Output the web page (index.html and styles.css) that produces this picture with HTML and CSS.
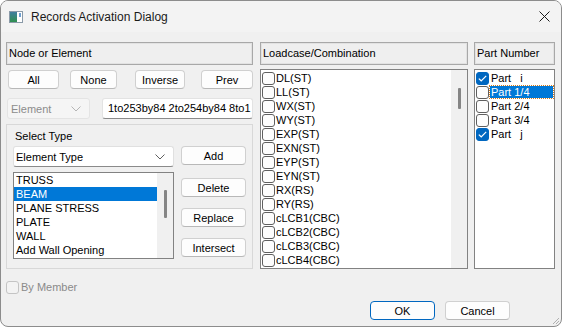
FILE: index.html
```html
<!DOCTYPE html>
<html lang="en">

<head>
    <meta charset="UTF-8">
    <title>Records Activation Dialog</title>
    <link rel="stylesheet" href="styles.css">
</head>

<body>

    <div class="window">
        <div class="titlebar">
            <svg class="app-icon" width="14" height="12" viewBox="0 0 14 12">
                <defs>
                    <linearGradient id="g1" x1="0" y1="0" x2="0" y2="1">
                        <stop offset="0" stop-color="#3f7f9f"/>
                        <stop offset="1" stop-color="#2f8f4f"/>
                    </linearGradient>
                </defs>
                <rect x="0.5" y="0.5" width="13" height="11" fill="#fff" stroke="#8a9aa8"/>
                <rect x="1" y="1" width="7" height="10" fill="url(#g1)"/>
                <rect x="10" y="2" width="2" height="4" fill="#6f9fcf"/>
            </svg>
            <span class="title">Records Activation Dialog</span>
            <svg class="close" width="11" height="11" viewBox="0 0 11 11">
                <path d="M0.5 0.5 L10.5 10.5 M10.5 0.5 L0.5 10.5" stroke="#1a1a1a" stroke-width="1"/>
            </svg>
        </div>

        <div class="content">
            <div class="columns">
                <div class="col col-left">
                    <div class="head">Node or Element</div>

                    <div class="btn-row">
                        <button class="btn b-all">All</button>
                        <button class="btn b-none">None</button>
                        <button class="btn b-inv">Inverse</button>
                        <button class="btn b-prev">Prev</button>
                    </div>

                    <div class="pick-row">
                        <div class="combo disabled">
                            <span>Element</span>
                            <svg class="chev" width="10" height="6" viewBox="0 0 10 6"><path d="M0.5 0.5 L5 5 L9.5 0.5" fill="none" stroke="#b5b5b5"/></svg>
                        </div>
                        <div class="textbox">1to253by84 2to254by84 8to1</div>
                    </div>

                    <div class="group">
                        <div class="group-label">Select Type</div>
                        <div class="group-body">
                            <div class="group-main">
                                <div class="combo type-combo">
                                    <span>Element Type</span>
                                    <svg class="chev" width="10" height="6" viewBox="0 0 10 6"><path d="M0.5 0.5 L5 5 L9.5 0.5" fill="none" stroke="#606060"/></svg>
                                </div>
                                <div class="listbox">
                                    <div class="items">
                                        <div class="item">TRUSS</div>
                                        <div class="item sel">BEAM</div>
                                        <div class="item">PLANE STRESS</div>
                                        <div class="item">PLATE</div>
                                        <div class="item">WALL</div>
                                        <div class="item">Add Wall Opening</div>
                                        <div class="item">PLANE STRAIN</div>
                                    </div>
                                    <div class="scroll"><div class="thumb t-type"></div></div>
                                </div>
                            </div>
                            <div class="group-side">
                                <button class="btn side b-add">Add</button>
                                <button class="btn side b-del">Delete</button>
                                <button class="btn side b-rep">Replace</button>
                                <button class="btn side b-int">Intersect</button>
                            </div>
                        </div>
                    </div>
                </div>

                <div class="col col-mid">
                    <div class="head">Loadcase/Combination</div>
                    <div class="listbox checklist">
                        <div class="items">
                            <div class="check-item"><span class="box"></span>DL(ST)</div>
                            <div class="check-item"><span class="box"></span>LL(ST)</div>
                            <div class="check-item"><span class="box"></span>WX(ST)</div>
                            <div class="check-item"><span class="box"></span>WY(ST)</div>
                            <div class="check-item"><span class="box"></span>EXP(ST)</div>
                            <div class="check-item"><span class="box"></span>EXN(ST)</div>
                            <div class="check-item"><span class="box"></span>EYP(ST)</div>
                            <div class="check-item"><span class="box"></span>EYN(ST)</div>
                            <div class="check-item"><span class="box"></span>RX(RS)</div>
                            <div class="check-item"><span class="box"></span>RY(RS)</div>
                            <div class="check-item"><span class="box"></span>cLCB1(CBC)</div>
                            <div class="check-item"><span class="box"></span>cLCB2(CBC)</div>
                            <div class="check-item"><span class="box"></span>cLCB3(CBC)</div>
                            <div class="check-item"><span class="box"></span>cLCB4(CBC)</div>
                        </div>
                        <div class="scroll"><div class="thumb t-load"></div></div>
                    </div>
                </div>

                <div class="col col-right">
                    <div class="head">Part Number</div>
                    <div class="listbox checklist parts">
                        <div class="items">
                            <div class="check-item"><span class="box on"><svg width="9" height="7" viewBox="0 0 9 7"><path d="M0.8 3.6 L3.2 5.8 L8.2 0.8" fill="none" stroke="#fff" stroke-width="1.2"/></svg></span><span class="lbl">Part&nbsp;&nbsp;&nbsp;i</span></div>
                            <div class="check-item"><span class="box"></span><span class="lbl focus">Part 1/4</span></div>
                            <div class="check-item"><span class="box"></span><span class="lbl">Part 2/4</span></div>
                            <div class="check-item"><span class="box"></span><span class="lbl">Part 3/4</span></div>
                            <div class="check-item"><span class="box on"><svg width="9" height="7" viewBox="0 0 9 7"><path d="M0.8 3.6 L3.2 5.8 L8.2 0.8" fill="none" stroke="#fff" stroke-width="1.2"/></svg></span><span class="lbl">Part&nbsp;&nbsp;&nbsp;j</span></div>
                        </div>
                    </div>
                </div>
            </div>

            <div class="by-member"><span class="box dim"></span>By Member</div>

            <div class="footer">
                <button class="btn default">OK</button>
                <button class="btn">Cancel</button>
            </div>
        </div>
        <svg class="grip" width="8" height="8" viewBox="0 0 8 8"><path d="M7 1 L1 7 M7 4 L4 7" stroke="#b0b0b0"/></svg>
    </div>

</body>

</html>
```

FILE: styles.css
```css
body, html {
    margin: 0;
    padding: 0;
    background-color: #ffffff;
}

.window {
    position: relative;
    width: 560px;
    height: 325px;
    border: 1px solid #8c8c8c;
    border-radius: 8px;
    background-color: #f0f0f0;
    overflow: hidden;
    font-family: 'Liberation Sans', Arial, sans-serif;
    font-size: 11px;
    color: #000;
}

.titlebar {
    height: 31px;
    background-color: #f3f3f3;
    display: flex;
    align-items: center;
}

.app-icon {
    margin-left: 8px;
    margin-right: 8px;
}

.title {
    font-size: 12px;
    color: #1a1a1a;
    flex: 1;
}

.close {
    margin-right: 11px;
}

.content {
    padding: 10px 0 0 5px;
}

.columns {
    display: flex;
    height: 227px;
}

.col {
    display: flex;
    flex-direction: column;
}

.col-left {
    width: 247px;
}

.col-mid {
    width: 208px;
    margin-left: 7px;
}

.col-right {
    width: 81px;
    margin-left: 6px;
}

.head {
    height: 21px;
    line-height: 21px;
    padding-left: 2px;
    border: 1px solid #a8a8a8;
    box-shadow: inset 0 0 0 1px #e2e2e2;
    background-color: #efefef;
    white-space: nowrap;
    overflow: hidden;
}

.btn {
    font-family: inherit;
    font-size: 11px;
    color: #000;
    background-color: #fdfdfd;
    border: 1px solid #d0d0d0;
    border-bottom-color: #b8b8b8;
    border-radius: 4px;
    height: 19px;
    padding: 0;
}

.btn-row {
    display: flex;
    margin-top: 5px;
    height: 19px;
}

.b-all { width: 51px; margin-left: 2px; }
.b-none { width: 47px; margin-left: 11px; }
.b-inv { width: 50px; margin-left: 18px; }
.b-prev { width: 52px; margin-left: 16px; }

.pick-row {
    display: flex;
    margin-top: 9px;
    height: 21px;
}

.combo {
    display: flex;
    align-items: center;
    justify-content: space-between;
    box-sizing: border-box;
    padding: 0 8px 0 3px;
    border-radius: 3px;
}

.combo.disabled {
    width: 83px;
    margin-left: 1px;
    background-color: #f5f5f5;
    border: 1px solid #e4e4e4;
    color: #8c8c8c;
}

.textbox {
    box-sizing: border-box;
    width: 151px;
    margin-left: 12px;
    background-color: #fff;
    border: 1px solid #e3e3e3;
    border-bottom-color: #8a8a8a;
    border-radius: 3px;
    padding: 0 0 0 5px;
    line-height: 19px;
    white-space: nowrap;
    overflow: hidden;
}

.group {
    margin-top: 5px;
    flex: 1;
    border: 1px solid #d8d8d8;
    padding: 4px 0 0 6px;
}

.group-label {
    height: 15px;
    line-height: 15px;
    padding-left: 2px;
}

.group-body {
    display: flex;
    margin-top: 2px;
}

.group-main {
    width: 161px;
}

.type-combo {
    height: 21px;
    background-color: #fff;
    border: 1px solid #e0e0e0;
    border-bottom-color: #8a8a8a;
    padding-left: 2px;
}

.listbox {
    display: flex;
    background-color: #fff;
    border: 1px solid #828282;
    overflow: hidden;
}

.group-main .listbox {
    margin-top: 5px;
    height: 85px;
}

.items {
    flex: 1;
    overflow: hidden;
}

.item {
    height: 14px;
    line-height: 14px;
    padding-left: 2px;
    white-space: nowrap;
}

.item.sel {
    background-color: #0078d7;
    color: #fff;
}

.scroll {
    width: 16px;
    background-color: #f0f0f0;
    display: flex;
    justify-content: center;
}

.thumb {
    width: 3px;
    background-color: #858585;
    border-radius: 1px;
}

.t-type {
    margin-top: 17px;
    height: 28px;
}

.t-load {
    margin-top: 18px;
    height: 21px;
}

.group-side {
    display: flex;
    flex-direction: column;
    margin-left: 7px;
}

.side {
    width: 65px;
}

.b-del { margin-top: 13px; }
.b-rep { margin-top: 11px; }
.b-int { margin-top: 11px; }

.checklist {
    margin-top: 4px;
    flex: 1;
}

.checklist .items {
    padding-top: 1px;
}

.check-item {
    display: flex;
    align-items: center;
    height: 14px;
    line-height: 14px;
    white-space: nowrap;
}

.box {
    flex: none;
    box-sizing: border-box;
    width: 13px;
    height: 13px;
    margin: 0 1px 0 1px;
    border: 1px solid #5f5f5f;
    border-radius: 3px;
    background-color: #fdfdfd;
    display: flex;
    align-items: center;
    justify-content: center;
}

.box.on {
    background-color: #0067c0;
    border-color: #0067c0;
}

.lbl {
    padding: 0 1px;
    line-height: 12px;
}

.lbl.focus {
    flex: 1;
    margin-right: 1px;
    background-color: #0078d7;
    color: #fff;
    outline: 1px dotted #d47a1c;
}

.by-member {
    display: flex;
    align-items: center;
    margin-top: 11px;
    height: 14px;
    color: #8a8a8a;
}

.box.dim {
    margin-left: 0;
    margin-right: 2px;
    border-color: #c4c4c4;
    background-color: #f3f3f3;
}

.footer {
    display: flex;
    margin-top: 7px;
    padding-left: 364px;
}

.footer .btn {
    width: 65px;
    margin-right: 10px;
}

.btn.default {
    border: 1px solid #0067c0;
}

.grip {
    position: absolute;
    right: 1px;
    bottom: 1px;
}
```
